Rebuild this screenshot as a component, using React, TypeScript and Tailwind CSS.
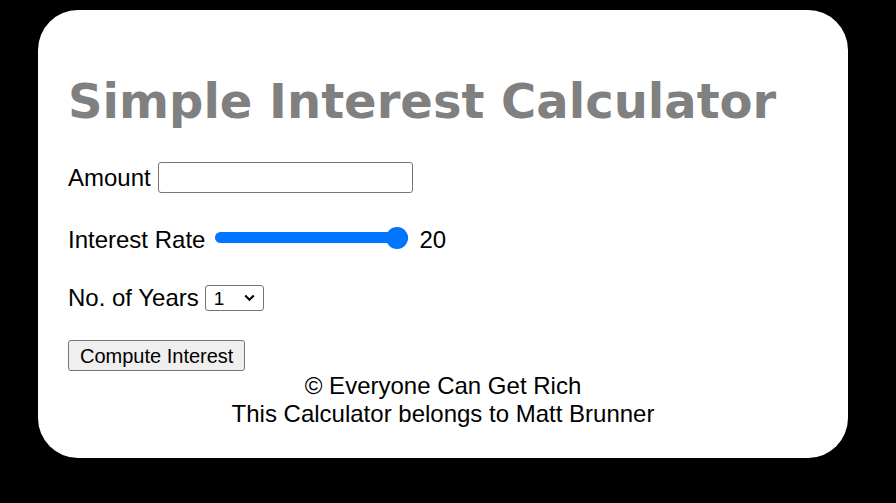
import { useState } from "react";

const App = () => {
  const [amount, setAmount] = useState("");
  const [rate, setRate] = useState(20);
  const [years, setYears] = useState("1");

  return (
    <div className="w-[896px] h-[503px] bg-black pt-[10px] pl-[38px] font-['Liberation_Sans',Arial,sans-serif] text-black">
      <div className="w-[810px] h-[448px] bg-white rounded-[40px] px-[30px] pt-[67px]">
        <h1 className="font-['DejaVu_Sans',Verdana,sans-serif] font-bold text-[48px] leading-none text-[#808080]">
          Simple Interest Calculator
        </h1>

        <div className="mt-[37px] h-[31px] flex items-center text-[24px]">
          <label htmlFor="amount">Amount</label>
          <input
            id="amount"
            type="text"
            value={amount}
            onChange={(e) => setAmount(e.target.value)}
            className="ml-[7px] w-[255px] h-[31px] border border-[#767676] rounded-[3px] px-[3px] text-[20px] bg-white"
          />
        </div>

        <div className="mt-[32px] h-[30px] flex items-center text-[24px]">
          <label htmlFor="rate">Interest Rate</label>
          <input
            id="rate"
            type="range"
            min={1}
            max={20}
            value={rate}
            onChange={(e) => setRate(Number(e.target.value))}
            className="ml-[10px] mb-[5px] w-[193px] h-[22px] appearance-none bg-transparent cursor-pointer [&::-webkit-slider-runnable-track]:h-[11px] [&::-webkit-slider-runnable-track]:rounded-full [&::-webkit-slider-runnable-track]:bg-[#0075ff] [&::-webkit-slider-thumb]:appearance-none [&::-webkit-slider-thumb]:w-[22px] [&::-webkit-slider-thumb]:h-[22px] [&::-webkit-slider-thumb]:rounded-full [&::-webkit-slider-thumb]:bg-[#0075ff] [&::-webkit-slider-thumb]:mt-[-5.5px]"
          />
          <span className="ml-[11px]">{rate}</span>
        </div>

        <div className="mt-[30px] h-[26px] flex items-center text-[24px]">
          <label htmlFor="years">No. of Years</label>
          <div className="relative ml-[6px] flex">
            <select
              id="years"
              value={years}
              onChange={(e) => setYears(e.target.value)}
              className="appearance-none w-[59px] h-[26px] border border-[#767676] rounded-[3px] pl-[8px] text-[19px] leading-none bg-white"
            >
              {[1, 2, 3, 4, 5, 6, 7, 8, 9].map((y) => (
                <option key={y} value={y}>
                  {y}
                </option>
              ))}
            </select>
            <svg
              className="absolute right-[9px] top-[9px] pointer-events-none"
              width="11"
              height="8"
              viewBox="0 0 11 8"
              fill="none"
            >
              <path d="M1.2 1.5 L5.5 5.8 L9.8 1.5" stroke="black" strokeWidth="2" />
            </svg>
          </div>
        </div>

        <button
          type="button"
          className="mt-[29px] h-[31px] px-[11px] border border-[#767676] rounded-[3px] bg-[#efefef] text-[20px] leading-none"
        >
          Compute Interest
        </button>

        <div className="mt-[1px] text-center text-[24px] leading-[27.6px]">
          <p>© Everyone Can Get Rich</p>
          <p>This Calculator belongs to Matt Brunner</p>
        </div>
      </div>
    </div>
  );
};

export default App;
